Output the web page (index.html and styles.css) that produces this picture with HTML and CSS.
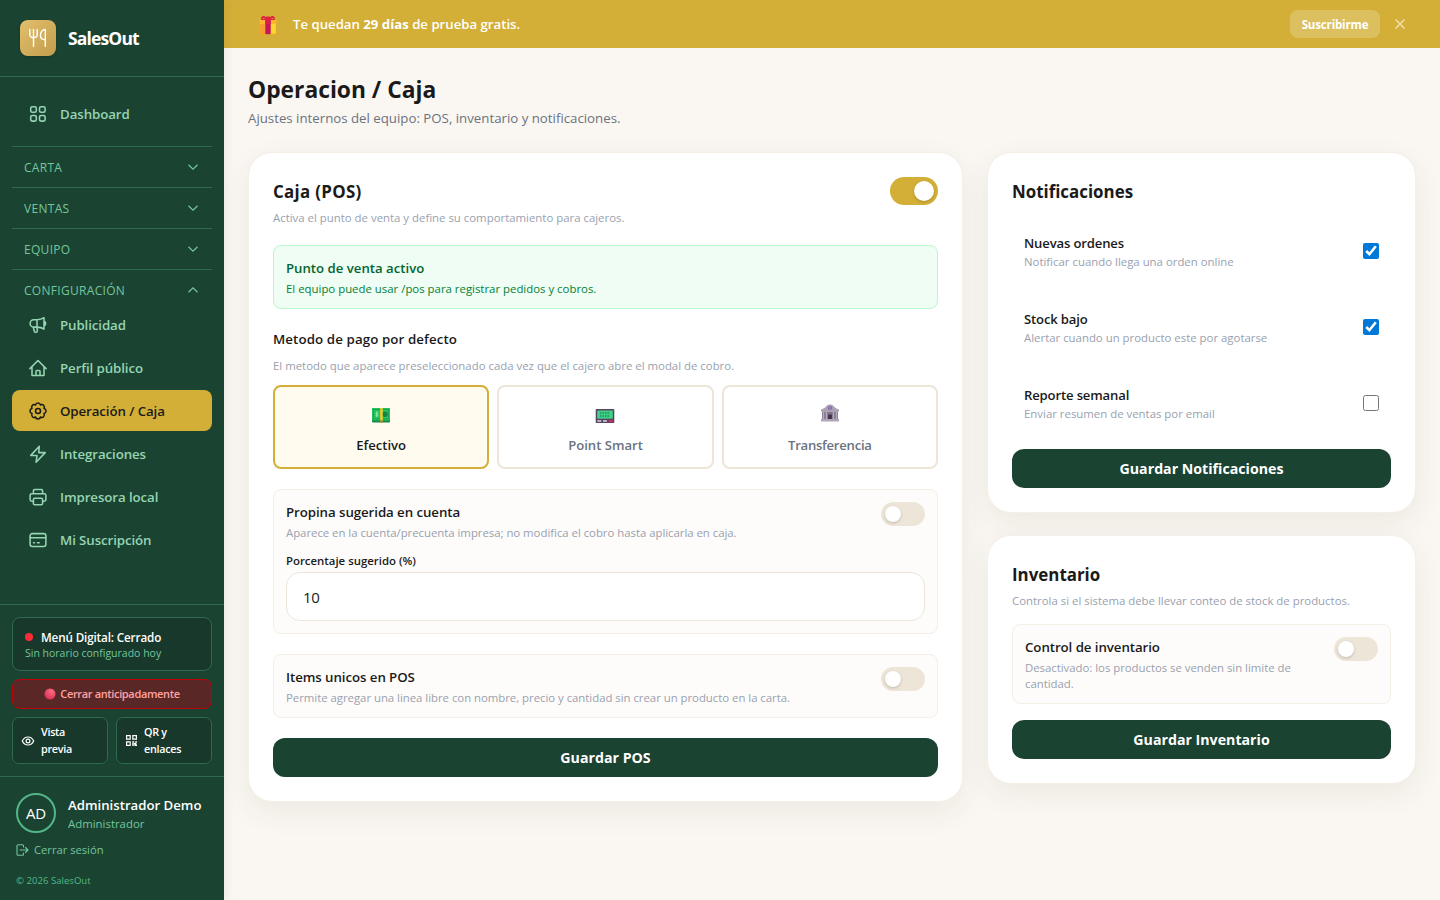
FILE: index.html
```html
<!DOCTYPE html>
<html lang="es">
<head>
<meta charset="utf-8">
<title>SalesOut - Operación / Caja</title>
<link rel="stylesheet" href="styles.css">
</head>
<body>
<div class="app">
  <aside class="sidebar">
    <div class="brand">
      <div class="logo"><svg width="20" height="20" viewBox="0 0 20 20" fill="none" stroke="#fff" stroke-width="1.4" stroke-linecap="round" stroke-linejoin="round"><path d="M1.800 1.500v5.300a3.600 2.800 0 0 0 7.400 0V1.500M5.500 1.500v16.700M17.300 18.200V1.500c-3 0-4.800 2.500-4.800 6 0 2.700 1 4.200 4.800 4.200"/></svg></div>
      <span class="brand-name">SalesOut</span>
    </div>
    <nav class="nav">
      <a class="item first"><svg class="ico" viewBox="0 0 18 18"><rect x="1.700" y="1.700" width="5.600" height="5.600" rx="1.600"/><rect x="10.500" y="1.700" width="5.600" height="5.600" rx="1.600"/><rect x="1.700" y="10.500" width="5.600" height="5.600" rx="1.600"/><rect x="10.500" y="10.500" width="5.600" height="5.600" rx="1.600"/></svg><span>Dashboard</span></a>
      <div class="group"><span>CARTA</span><svg class="chev" viewBox="0 0 12 12"><path d="M1.500 3.800 6 8.200l4.500-4.400"/></svg></div>
      <div class="group"><span>VENTAS</span><svg class="chev" viewBox="0 0 12 12"><path d="M1.500 3.800 6 8.200l4.500-4.400"/></svg></div>
      <div class="group"><span>EQUIPO</span><svg class="chev" viewBox="0 0 12 12"><path d="M1.500 3.800 6 8.200l4.500-4.400"/></svg></div>
      <div class="group open"><span>CONFIGURACIÓN</span><svg class="chev" viewBox="0 0 12 12"><path d="M1.500 8.200 6 3.800l4.500 4.400"/></svg></div>
      <div class="items">
        <a class="item"><svg class="ico" viewBox="0 0 18 18"><path d="M8 3.700H4.800a3.700 3.700 0 0 0 0 7.400H8M8 3.700c2.700 0 5-.5 7-2v11.400c-2-1.500-4.300-2-7-2M8 3.700v7.400M15 5.200c2.200.6 2.200 4 0 4.600M4.300 11.200l1.100 4.300c.3 1 2.900.9 2.900-.3L8 11.200"/></svg><span>Publicidad</span></a>
        <a class="item"><svg class="ico" viewBox="0 0 18 18"><path d="M.9 9.600 9 1.500l8.100 8.100M3 7.700v8.800h12V7.700M7 16.500v-4.200c0-.6.3-.9.900-.9h2.200c.6 0 .9.300.9.900v4.200"/></svg><span>Perfil público</span></a>
        <a class="item active"><svg class="ico" viewBox="0 0 18 18"><path d="M6.500 3C6.800 1.500 7.600 1 9 1s2.200.5 2.500 2c1.300-.8 2.200-.7 3.100.3 1 1 1.100 1.900.4 3.200 1.500.3 2 1.100 2 2.500s-.5 2.200-2 2.500c.7 1.300.6 2.200-.4 3.200-.9 1-1.800 1.100-3.100.3-.3 1.500-1.100 2-2.500 2s-2.200-.5-2.500-2c-1.300.8-2.200.7-3.100-.3-1-1-1.100-1.900-.4-3.200-1.500-.3-2-1.100-2-2.500s.5-2.200 2-2.500c-.7-1.300-.6-2.200.4-3.200.9-1 1.800-1.100 3.100-.3z"/><circle cx="9" cy="9" r="2.500"/></svg><span>Operación / Caja</span></a>
        <a class="item"><svg class="ico" viewBox="0 0 18 18"><path d="M10.300 1.200 1.800 10.400H8l-.9 6.800 9.100-9.600H9.700z"/></svg><span>Integraciones</span></a>
        <a class="item"><svg class="ico" viewBox="0 0 18 18"><path d="M4.400 5.700V2.800c0-.8.500-1.300 1.300-1.300h6.600c.8 0 1.300.5 1.300 1.300v2.900M4.400 13.300H2.800c-1 0-1.700-.7-1.700-1.700V7.500c0-1 .7-1.700 1.700-1.700h12.400c1 0 1.700.7 1.700 1.700v4.100c0 1-.7 1.700-1.700 1.700h-1.600"/><rect x="4.400" y="10.200" width="9.200" height="6.500" rx="1.300"/></svg><span>Impresora local</span></a>
        <a class="item"><svg class="ico" viewBox="0 0 18 18"><rect x="1.100" y="2.600" width="15.800" height="12.800" rx="2.200"/><path d="M1.100 6.700h15.800M4.500 11.800h1M8.500 11.800h1.700"/></svg><span>Mi Suscripción</span></a>
      </div>
    </nav>
    <div class="status">
      <div class="status-card">
        <div class="status-title"><i class="dot"></i><span>Menú Digital: Cerrado</span></div>
        <div class="status-sub">Sin horario configurado hoy</div>
      </div>
      <div class="close-early"><svg width="12" height="12" viewBox="0 0 12 12"><defs><radialGradient id="ball" cx=".65" cy=".25" r=".8"><stop offset="0" stop-color="#ff6b86"/><stop offset="1" stop-color="#d4314f"/></radialGradient></defs><circle cx="6" cy="6" r="5.500" fill="url(#ball)"/></svg><span>Cerrar anticipadamente</span></div>
      <div class="quick">
        <div class="quick-btn"><svg width="14" height="14" viewBox="0 0 14 14" fill="none" stroke="#fff" stroke-width="1.200"><path d="M1.300 7C2.500 4.500 4.500 3 7 3s4.500 1.500 5.700 4c-1.200 2.500-3.200 4-5.700 4S2.500 9.500 1.300 7z"/><circle cx="7" cy="7" r="1.900"/></svg><span>Vista<br>previa</span></div>
        <div class="quick-btn"><svg width="13" height="13" viewBox="0 0 13 13" fill="none" stroke="#fff" stroke-width="1.200"><path d="M1.600 1.600h3.600v3.600H1.600zM7.800 1.600h3.600v3.600H7.800zM1.600 7.800h3.600v3.600H1.600z"/><path d="M7.200 8h2M10.200 8H12M8 9v3M9 9.800h2.400M9.500 11.300h2.500" stroke-width="1.500"/></svg><span>QR y<br>enlaces</span></div>
      </div>
    </div>
    <div class="user">
      <div class="user-row">
        <div class="avatar">AD</div>
        <div class="user-info"><div class="user-name">Administrador Demo</div><div class="user-role">Administrador</div></div>
      </div>
      <div class="logout"><svg width="13" height="12" viewBox="0 0 13 12" fill="none" stroke="currentColor" stroke-width="1.100" stroke-linecap="round" stroke-linejoin="round"><path d="M7.500 3V1.800c0-.6-.5-1-1-1H2.200c-.7 0-1.200.4-1.200 1v8.400c0 .6.500 1 1.200 1h4.300c.5 0 1-.4 1-1V9M4 6h8M9.500 3.500 12 6 9.500 8.500"/></svg><span>Cerrar sesión</span></div>
      <div class="copy">© 2026 SalesOut</div>
    </div>
  </aside>

  <div class="page">
    <div class="banner">
      <svg class="gift" width="18" height="20" viewBox="0 0 18 20"><rect x="1.300" y="7.500" width="15.400" height="11.700" rx="1" fill="#fcc21b"/><path d="M1.300 8h5v11.200h-4a1 1 0 0 1-1-1z" fill="#f79a32"/><rect x=".5" y="5" width="17" height="4.200" rx="1" fill="#fdb52c"/><path d="M12 9.200h4.700v9h-4.700z" fill="#ffd82e"/><path d="M6.300 5h5.400v14.200H6.300z" fill="#c2185b"/><path d="M6.300 5h5.400v4.200H6.300z" fill="#d81e4a"/><path d="M9 5H2.500C1.500 3.500 2.500 1 4.500 1c1 0 1.500.4 2 1L8 1.500h2l1.500.5c.5-.6 1-1 2-1 2 0 3 2.500 2 4z" fill="#e0243f"/><path d="M3.800 4c0-1 1-1.300 2-.2zM14.200 4c0-1-1-1.300-2-.2z" fill="#d4af37"/></svg>
      <p class="banner-text">Te quedan <b>29 días</b> de prueba gratis.</p>
      <div class="subscribe">Suscribirme</div>
      <svg class="close" width="12" height="12" viewBox="0 0 12 12" fill="none" stroke="#f3e6bd" stroke-width="1.200"><path d="M1.500 1.500l9 9M10.500 1.500l-9 9"/></svg>
    </div>
    <main class="main">
      <h1>Operacion / Caja</h1>
      <p class="lead">Ajustes internos del equipo: POS, inventario y notificaciones.</p>
      <div class="grid">
        <section class="card">
          <div class="card-head"><h2 class="wide">Caja (POS)</h2><div class="switch on"><i></i></div></div>
          <p class="hint">Activa el punto de venta y define su comportamiento para cajeros.</p>
          <div class="notice"><div class="notice-title">Punto de venta activo</div><div class="notice-text">El equipo puede usar /pos para registrar pedidos y cobros.</div></div>
          <h3 class="pay-title">Metodo de pago por defecto</h3>
          <p class="hint pay-hint">El metodo que aparece preseleccionado cada vez que el cajero abre el modal de cobro.</p>
          <div class="methods">
            <div class="method selected">
              <svg width="20" height="20" viewBox="0 0 20 20"><rect x="1" y="3" width="18" height="14.500" rx="1" fill="#15884d"/><rect x="1" y="3" width="18" height="12.500" rx="1" fill="#22c55e"/><path d="M2.500 4.500h15v9.500h-15z" fill="none" stroke="#159b50" stroke-width=".8"/><circle cx="14" cy="9.300" r="2.700" fill="#128447"/><path d="M5.800 6.500v5.500M7.200 8c-2-1.200-3 .8-1.300 1.300 1.800.5.800 2.500-1.400 1.400" stroke="#b9e6c9" stroke-width=".8" fill="none"/><path d="M9.200 3h2.500v12.500H9.200z" fill="#fcc92c"/><path d="M9.200 15.500h2.500v2H9.200z" fill="#c98225"/></svg>
              <span>Efectivo</span></div>
            <div class="method">
              <svg width="20" height="20" viewBox="0 0 20 20"><rect x=".7" y="4" width="18.600" height="14" rx="1" fill="#594561"/><path d="M2.200 5.500h15.600v8.200H2.200z" fill="#3ed187"/><path d="M5 8h10M5 11h10" stroke="#238b60" stroke-width="1.300" stroke-dasharray="1.500 1"/><path d="M2.300 15.200h4v1.600h-4zM8 15.200h4v1.600H8z" fill="#d9d2df"/><path d="M13.700 15.200h4v1.600h-4z" fill="#f1245d"/></svg>
              <span>Point Smart</span></div>
            <div class="method bank">
              <svg width="20" height="20" viewBox="0 0 20 20"><path d="M1 6.500C4 6 6 3.500 7 2.500c1.500-1.500 4.500-1.500 6 0 1 1 3 3.500 6 4v2H1z" fill="#aaa1b5"/><path d="M2 8.500h16v8H2z" fill="#81748b"/><path d="M3.500 9v7M6.500 9v7M13.500 9v7M16.500 9v7" stroke="#b6adc0" stroke-width="1.400"/><path d="M8 11.500h4v5H8z" fill="#44334f"/><path d="M1 16h18v2.500H1z" fill="#aea5b9"/><circle cx="10" cy="5" r="2" fill="#776099"/><path d="M10 3.500v3" stroke="#d5c9ea" stroke-width=".7"/></svg>
              <span>Transferencia</span></div>
          </div>
          <div class="box tip-box">
            <div class="box-row"><div><h3>Propina sugerida en cuenta</h3><p class="hint">Aparece en la cuenta/precuenta impresa; no modifica el cobro hasta aplicarla en caja.</p></div><div class="switch"><i></i></div></div>
            <label class="label" for="pct">Porcentaje sugerido (%)</label>
            <input id="pct" class="input" type="text" value="10">
          </div>
          <div class="box unique-box">
            <div class="box-row"><div><h3>Items unicos en POS</h3><p class="hint">Permite agregar una linea libre con nombre, precio y cantidad sin crear un producto en la carta.</p></div><div class="switch"><i></i></div></div>
          </div>
          <button class="btn">Guardar POS</button>
        </section>
        <div class="side">
          <section class="card">
            <div class="card-head"><h2>Notificaciones</h2></div>
            <div class="checks">
              <label class="check"><span><b>Nuevas ordenes</b><small>Notificar cuando llega una orden online</small></span><input type="checkbox" checked></label>
              <label class="check"><span><b>Stock bajo</b><small>Alertar cuando un producto este por agotarse</small></span><input type="checkbox" checked></label>
              <label class="check"><span><b>Reporte semanal</b><small>Enviar resumen de ventas por email</small></span><input type="checkbox"></label>
            </div>
            <button class="btn">Guardar Notificaciones</button>
          </section>
          <section class="card">
            <div class="card-head"><h2>Inventario</h2></div>
            <p class="hint">Controla si el sistema debe llevar conteo de stock de productos.</p>
            <div class="box inv-box">
              <div class="box-row"><div><h3>Control de inventario</h3><p class="hint">Desactivado: los productos se venden sin limite de<br>cantidad.</p></div><div class="switch"><i></i></div></div>
            </div>
            <button class="btn">Guardar Inventario</button>
          </section>
        </div>
      </div>
    </main>
  </div>
</div>
</body>
</html>
```
FILE: styles.css
```css
* { box-sizing: border-box; }
body, h1, h2, h3, p { margin: 0; }
body {
  font-family: "Open Sans", "Noto Sans", sans-serif;
  background: #faf7f2;
  color: #1a1a1a;
}
.app { display: flex; height: 900px; overflow: hidden; }

/* Sidebar */
.sidebar {
  width: 224px;
  flex: none;
  display: flex;
  flex-direction: column;
  background: #1b4332;
  box-shadow: 2px 0 10px rgba(0, 0, 0, .06);
  position: relative;
}
.brand {
  height: 77px;
  padding: 0 20px;
  display: flex;
  align-items: center;
  gap: 12px;
  border-bottom: 1px solid #2d6a4f;
}
.logo {
  width: 36px;
  height: 36px;
  border-radius: 8px;
  background: linear-gradient(135deg, #e3bf6c, #c19e4c);
  box-shadow: 0 1px 3px rgba(0, 0, 0, .2);
  display: flex;
  justify-content: center;
  align-items: center;
}
.brand-name { color: #fff; font-size: 17.500px; font-weight: 700; letter-spacing: -.85px; }
.nav { flex: 1; padding: 16px 12px 0; }
.item {
  height: 41px;
  padding: 0 17px;
  display: flex;
  align-items: center;
  gap: 13px;
  border-radius: 8px;
  color: #95d5b2;
  font-size: 13.300px;
  font-weight: 600;
}
.item span { letter-spacing: -.1px; }
.first { margin-bottom: 12px; }
.items { display: flex; flex-direction: column; gap: 2px; }
.active { background: #d4af37; color: #1a1a1a; }
.ico { width: 18px; height: 18px; fill: none; stroke: currentColor; stroke-width: 1.550; stroke-linecap: round; stroke-linejoin: round; }
.group {
  height: 41px;
  padding: 0 13px 0 12px;
  display: flex;
  align-items: center;
  justify-content: space-between;
  border-top: 1px solid #2d6a4f;
  color: #74c69d;
  font-size: 12px;
  letter-spacing: .3px;
}
.group.open { margin-bottom: -6px; }
.chev { width: 12px; height: 12px; fill: none; stroke: currentColor; stroke-width: 1.200; }
.status { padding: 12px; border-top: 1px solid #2d6a4f; border-bottom: 1px solid #2d6a4f; height: 173px; }
.status-card { height: 54px; padding: 10px 12px; border: 1px solid #2d6a4f; border-radius: 8px; background: #18382b; }
.status-title { display: flex; align-items: center; gap: 8px; height: 17px; margin-bottom: 1px; font-size: 11.700px; letter-spacing: -.15px; font-weight: 600; color: #fff; }
.dot { width: 8px; height: 8px; border-radius: 50%; background: #fb2c36; }
.status-sub { font-size: 10.500px; line-height: 15px; color: #74c69d; }
.close-early {
  margin-top: 8px;
  height: 30px;
  padding-bottom: 1px;
  display: flex;
  align-items: center;
  justify-content: center;
  gap: 4px;
  border: 1px solid #c10007;
  border-radius: 8px;
  background: #5a2727;
  color: #ffa2a2;
  font-size: 11px;
  letter-spacing: -.35px;
  font-weight: 600;
}
.quick { margin-top: 8px; display: grid; grid-template-columns: 1fr 1fr; gap: 8px; }
.quick-btn {
  height: 47px;
  padding: 0 8px;
  display: flex;
  align-items: center;
  gap: 6px;
  border: 1px solid #2d6a4f;
  border-radius: 7px;
  background: #18382b;
  color: #fff;
  font-size: 10.800px;
  letter-spacing: -.3px;
  line-height: 16.500px;
  font-weight: 600;
}
.user { height: 123px; padding: 16px; }
.user-row { display: flex; align-items: center; gap: 12px; height: 40px; }
.user-info { padding-top: 2px; }
.avatar { width: 40px; height: 40px; border: 2px solid #52b788; border-radius: 50%; color: #fff; font-size: 15px; letter-spacing: -.3px; display: flex; align-items: center; justify-content: center; }
.user-name { color: #fff; font-size: 13.200px; line-height: 20px; font-weight: 600; white-space: nowrap; }
.user-role { color: #74c69d; font-size: 11.400px; line-height: 18px; }
.logout { margin-top: 8px; display: flex; align-items: center; gap: 5px; color: #74c69d; font-size: 11.200px; line-height: 17px; }
.copy { margin-top: 15px; color: #52b788; font-size: 9.600px; line-height: 15px; }

/* Page */
.page { flex: 1; min-width: 0; }
.banner { height: 48px; padding: 0 34px 0 35px; display: flex; align-items: center; background: #d4af37; color: #fff; }
.gift { margin-top: 2px; }
.banner-text { margin-left: 16px; flex: 1; font-size: 13.200px; font-weight: 600; }
.banner-text b { font-weight: 700; }
.subscribe { width: 90px; height: 28px; border-radius: 8px; background: rgba(255, 255, 255, .2); font-size: 11.500px; letter-spacing: -.15px; line-height: 29px; font-weight: 700; text-align: center; }
.close { margin-left: 14px; }
.main { padding: 24px; }
h1 { font-size: 22.800px; line-height: 36px; font-weight: 700; }
.lead { font-size: 13.250px; line-height: 20px; color: #6b7280; }
.grid { margin-top: 24px; display: grid; grid-template-columns: 715px 429px; gap: 24px; align-items: start; }
.side { display: flex; flex-direction: column; gap: 22px; }
.card { padding: 24px; border: 1px solid #f5efe6; border-radius: 24px; background: #fff; box-shadow: 0 10px 30px rgba(60, 45, 20, .07); }
.card-head { height: 28px; display: flex; align-items: center; justify-content: space-between; }
h2 { padding-top: 2px; font-size: 16.900px; line-height: 28px; font-weight: 700; }
h2.wide { letter-spacing: .3px; }
h3 { font-size: 13.300px; line-height: 20px; font-weight: 600; }
.hint { font-size: 11.400px; line-height: 16px; color: #99a1af; white-space: nowrap; }
.card-head + .hint { margin-top: 5px; }
.switch { width: 44px; height: 24px; padding: 4px; border-radius: 14px; background: #ede5d8; display: flex; flex: none; }
.switch i { width: 16px; height: 16px; border-radius: 50%; background: #fff; box-shadow: 0 1px 3px rgba(0, 0, 0, .2); }
.switch.on { width: 48px; height: 28px; background: #d4af37; justify-content: flex-end; }
.switch.on i { width: 20px; height: 20px; }
.notice { height: 64px; margin-top: 19px; padding: 12px; border: 1px solid #b9f8cf; border-radius: 8px; background: #f0fdf4; color: #016630; }
.notice-title { font-size: 13.200px; line-height: 20px; font-weight: 600; }
.notice-text { font-size: 11.400px; line-height: 22px; color: #008236; }
.pay-title { margin-top: 20px; letter-spacing: .1px; }
.pay-hint { margin-top: 9px; }
.methods { margin-top: 11px; display: grid; grid-template-columns: repeat(3, 1fr); gap: 8px; }
.method { height: 84px; padding-top: 18px; border: 2px solid #ede5d8; border-radius: 8px; display: flex; flex-direction: column; align-items: center; gap: 10px; color: #6b7280; font-size: 13.100px; line-height: 20px; font-weight: 600; }
.bank svg { margin-top: -2px; margin-bottom: 2px; }
.bank span { letter-spacing: -.25px; }
.selected { border-color: #d4af37; background: #fffbef; color: #1a1a1a; }
.box { padding: 12px; border: 1px solid #f5efe6; border-radius: 8px; background: #fefcfa; }
.box h3 { letter-spacing: -.08px; }
.box-row { display: flex; justify-content: space-between; align-items: flex-start; }
.box-row .hint { margin-top: 3px; letter-spacing: -.03px; }
.tip-box { height: 145px; margin-top: 20px; }
.label { display: block; margin-top: 11px; font-size: 11.400px; line-height: 18px; font-weight: 600; }
.input { display: block; width: 100%; height: 49px; margin-top: 2px; padding: 0 16px; border: 1px solid #ede5d8; border-radius: 14px; background: #fff; color: #1a1a1a; font: 15px "Open Sans", sans-serif; letter-spacing: -.3px; }
.unique-box { height: 64px; margin-top: 20px; }
.btn { display: block; width: 100%; height: 39px; margin-top: 20px; padding: 0; border: 0; border-radius: 12px; background: #1b4332; color: #fff; font: 700 14.200px "Open Sans", sans-serif; }
.checks { margin-top: 8px; display: flex; flex-direction: column; }
.check { height: 76px; padding: 0 12px; display: flex; align-items: center; justify-content: space-between; }
.check b, .check small { display: block; }
.check b { font-size: 13.100px; line-height: 20px; font-weight: 600; letter-spacing: -.15px; }
.check small { font-size: 11.400px; line-height: 17px; color: #99a1af; }
.check input { width: 16px; height: 16px; margin: 0; accent-color: #0078d7; }
.checks + .btn { margin-top: 8px; }
.inv-box { height: 80px; margin-top: 15px; }
.inv-box + .btn { margin-top: 16px; }
```
